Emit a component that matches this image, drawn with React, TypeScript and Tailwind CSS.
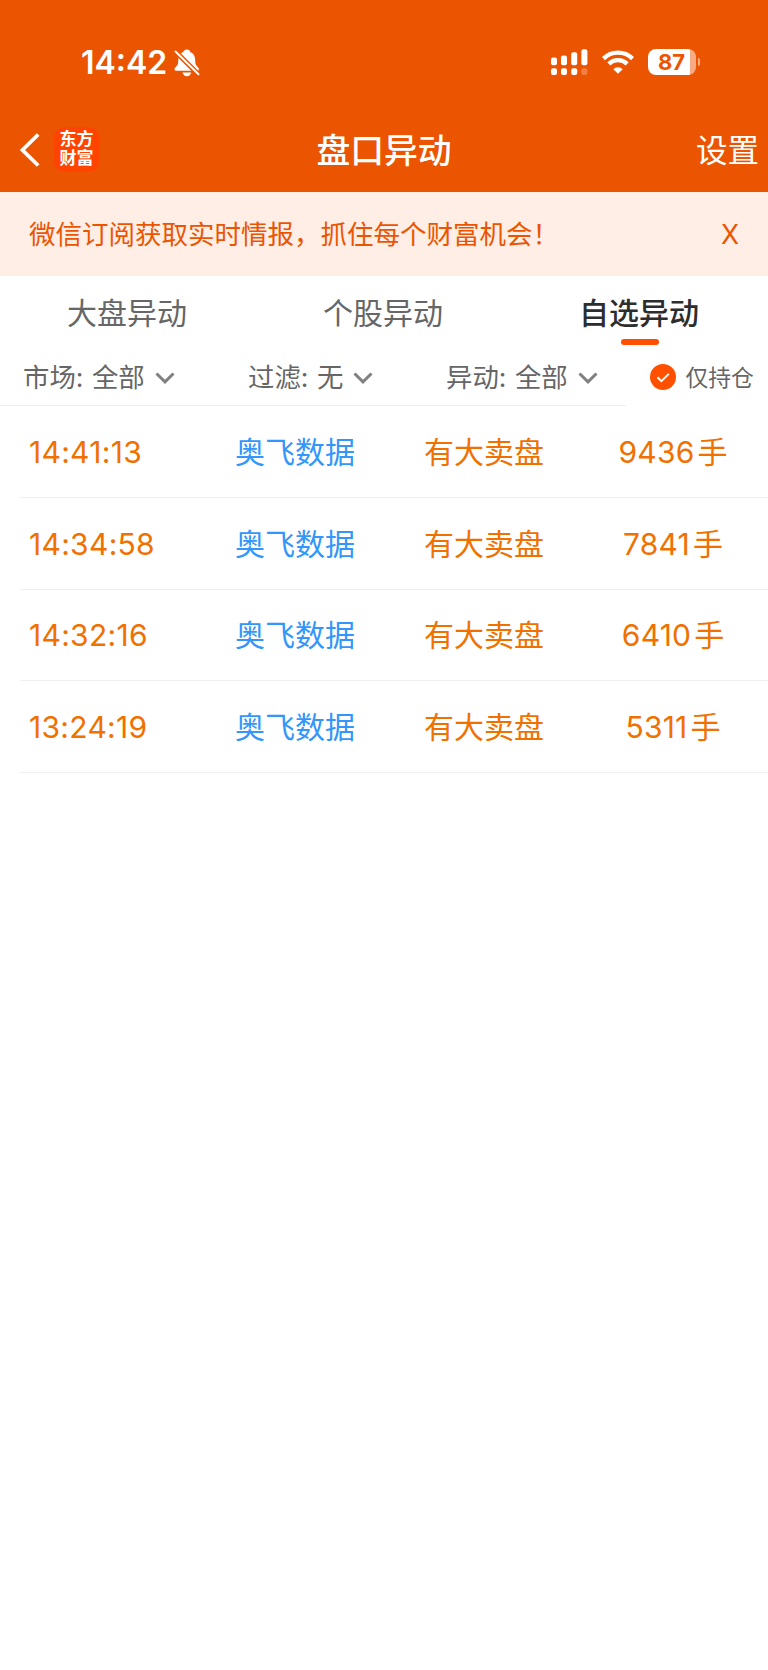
import React, { useState } from 'react';

interface Movement {
  time: string;
  stock: string;
  event: string;
  volume: number;
}

const MOVEMENTS: Movement[] = [
  { time: '14:41:13', stock: '奥飞数据', event: '有大卖盘', volume: 9436 },
  { time: '14:34:58', stock: '奥飞数据', event: '有大卖盘', volume: 7841 },
  { time: '14:32:16', stock: '奥飞数据', event: '有大卖盘', volume: 6410 },
  { time: '13:24:19', stock: '奥飞数据', event: '有大卖盘', volume: 5311 }
];

const TABS = ['大盘异动', '个股异动', '自选异动'];

const BellOffIcon = () => (
  <svg width="26" height="28" viewBox="0 0 26 28" fill="none">
    <path
      d="M.5 20.200c0-1.600 3.400-3.200 3.600-6.200.3-6 .8-9.400 5-10.800C9.700 1.600 11 .5 12.900.5s3.200 1.100 3.500 2.700c4.200 1.400 4.700 4.800 5 10.800.2 3 3.600 4.600 3.600 6.200 0 .9-.6 1.500-1.700 1.500H2.200C1.100 21.700.5 21.100.5 20.200z"
      fill="white"
    />
    <path d="M8.600 23.500h8.600c-.4 2.200-2.100 3.700-4.300 3.700s-3.900-1.500-4.300-3.700z" fill="white" />
    <path d="M.5 1.500l25 25" stroke="#eb5502" strokeWidth="5" />
    <path d="M1.500 2.500l23 22.800" stroke="white" strokeWidth="2" strokeLinecap="round" />
  </svg>
);

const SignalIcon = () => (
  <svg width="38" height="27" viewBox="0 0 38 27" fill="white">
    <rect x="1" y="8.500" width="6" height="7.700" rx="2" />
    <rect x="11" y="6.500" width="6" height="9.700" rx="2" />
    <rect x="21.200" y="3.200" width="6" height="13" rx="2" />
    <rect x="31.400" y="0.200" width="6" height="16" rx="2" />
    <rect x="1" y="19.300" width="6" height="6.700" rx="2" />
    <rect x="11" y="19.300" width="6" height="6.700" rx="2" />
    <rect x="21.200" y="19.300" width="6" height="6.700" rx="2" />
    <rect x="31.400" y="19.300" width="6" height="6.700" rx="2" opacity="0.25" />
  </svg>
);

const WifiIcon = () => (
  <svg width="32" height="24" viewBox="0 0 32 24" fill="none" stroke="white" strokeWidth="4.300">
    <path d="M1.500 8.600a20.800 20.800 0 0 1 29 0" />
    <path d="M6.800 13.900a13.300 13.300 0 0 1 18.400 0" />
    <path d="M11.300 19.200a6.800 6.800 0 0 1 9.400 0L16 23.800z" fill="white" stroke="none" />
  </svg>
);

const ChevronDown = () => (
  <svg width="20" height="12" viewBox="0 0 20 12" fill="none" className="mt-[2px] shrink-0">
    <path d="M1.500 1.500L10 9.800l8.500-8.300" stroke="#808080" strokeWidth="3" />
  </svg>
);

const StatusBar = () => (
  <div className="flex h-[108px] items-start pt-[49px] pr-[68px] pl-[81px] text-white">
    <div className="flex items-start">
      <span className="w-[93px] font-['Inter'] text-[32px] leading-[27px] font-semibold">14:42</span>
      <BellOffIcon />
    </div>
    <div className="ml-auto flex items-start">
      <SignalIcon />
      <div className="mt-[1px] ml-[14px]">
        <WifiIcon />
      </div>
      <div className="ml-[14px] flex items-center">
        <div className="flex h-[26px] w-[48px] items-center overflow-hidden rounded-[8px] bg-linear-to-r from-white from-[87%] to-[#f6ab82] to-[87%]">
          <span className="w-[47px] text-center font-['Inter'] text-[22px] leading-none font-bold text-[#eb5502]">87</span>
        </div>
        <div className="ml-[2px] h-[8px] w-[2px] rounded-r-full bg-[#f6ab82]" />
      </div>
    </div>
  </div>
);

const Header = () => (
  <header className="bg-[#eb5502] text-white">
    <StatusBar />
    <div className="grid h-[84px] grid-cols-[1fr_auto_1fr] items-center">
      <div className="flex items-center pl-[20px]">
        <svg width="20" height="34" viewBox="0 0 20 34" fill="none">
          <path d="M18.200 1.500L2.500 17l15.700 15.500" stroke="white" strokeWidth="3.800" />
        </svg>
        <div className="mb-[2px] ml-[14px] flex h-[45px] w-[45px] flex-col items-center justify-center rounded-[10px] bg-[#ff4400] text-[17px] leading-[19px] font-bold">
          <span>东方</span>
          <span>财富</span>
        </div>
      </div>
      <h1 className="pt-[2px] text-[33.800px] leading-none font-medium">盘口异动</h1>
      <button className="justify-self-end pt-[2px] pr-[9px] text-[31.500px] leading-none font-normal">设置</button>
    </div>
  </header>
);

const Filter = ({ label, value, className }: { label: string; value: string; className: string }) => (
  <button className={`flex items-center whitespace-nowrap ${className}`}>
    <span className="text-[26.400px]">{label}:</span>
    <span className="mr-[10px] ml-[8.500px] text-[26.400px]">{value}</span>
    <ChevronDown />
  </button>
);

const App: React.FC = () => {
  const [activeTab, setActiveTab] = useState('自选异动');
  const [showBanner, setShowBanner] = useState(true);
  const [onlyHoldings, setOnlyHoldings] = useState(true);

  return (
    <div className="min-h-[1670px] w-[768px] bg-white font-['Inter','Noto_Sans_CJK_SC',sans-serif]">
      <Header />

      {showBanner && (
        <div className="flex h-[84px] items-center justify-between bg-[#feeee6] pt-[2px] pr-[29px] pl-[29px] text-[26.500px] text-[#eb5502]">
          <span>微信订阅获取实时情报，抓住每个财富机会！</span>
          <button onClick={() => setShowBanner(false)}>X</button>
        </div>
      )}

      <nav className="grid h-[72px] grid-cols-3">
        {TABS.map(tab => (
          <button
            key={tab}
            onClick={() => setActiveTab(tab)}
            className={`flex flex-col items-center text-[30px] leading-[63px] ${
              activeTab === tab ? 'font-medium text-[#2d2d2d]' : 'text-[#666666]'
            }`}
          >
            <span className="h-[63px] pt-[6px] pr-[2px]">{tab}</span>
            {activeTab === tab && <span className="h-[6px] w-[38px] rounded-full bg-[#ff5000]" />}
          </button>
        ))}
      </nav>

      <div className="flex h-[58px] text-[#666666]">
        <div className="flex w-[626px] items-center border-b border-[#f0f0f0] pt-[2px] pl-[23px]">
          <Filter label="市场" value="全部" className="w-[225px]" />
          <Filter label="过滤" value="无" className="w-[198px]" />
          <Filter label="异动" value="全部" className="" />
        </div>
        <button className="flex items-center pl-[24px]" onClick={() => setOnlyHoldings(!onlyHoldings)}>
          <svg width="26" height="26" viewBox="0 0 26 26" fill="none">
            <circle cx="13" cy="13" r="13" fill={onlyHoldings ? '#ff5000' : '#cccccc'} />
            <path d="M7.500 13.200l3.900 3.900 7.400-7.200" stroke="white" strokeWidth="2" />
          </svg>
          <span className="ml-[9.500px] pt-[2px] text-[22.800px]">仅持仓</span>
        </button>
      </div>

      <ul className="text-[30px] text-[#f07000]">
        {MOVEMENTS.map(item => (
          <li key={item.time} className="ml-[20px] flex h-[91.800px] items-center border-b border-[#f0f0f0] pt-[2px]">
            <span className="w-[215px] pl-[9px] tracking-[0.300px]">{item.time}</span>
            <span className="w-[189px] text-[#3296fa]">{item.stock}</span>
            <span className="w-[159px]">{item.event}</span>
            <span className="flex w-[180px] justify-center">
              <span className="tracking-[0.200px]">{item.volume}</span>
              <span className="ml-[3px]">手</span>
            </span>
          </li>
        ))}
      </ul>
    </div>
  );
};

export default App;
